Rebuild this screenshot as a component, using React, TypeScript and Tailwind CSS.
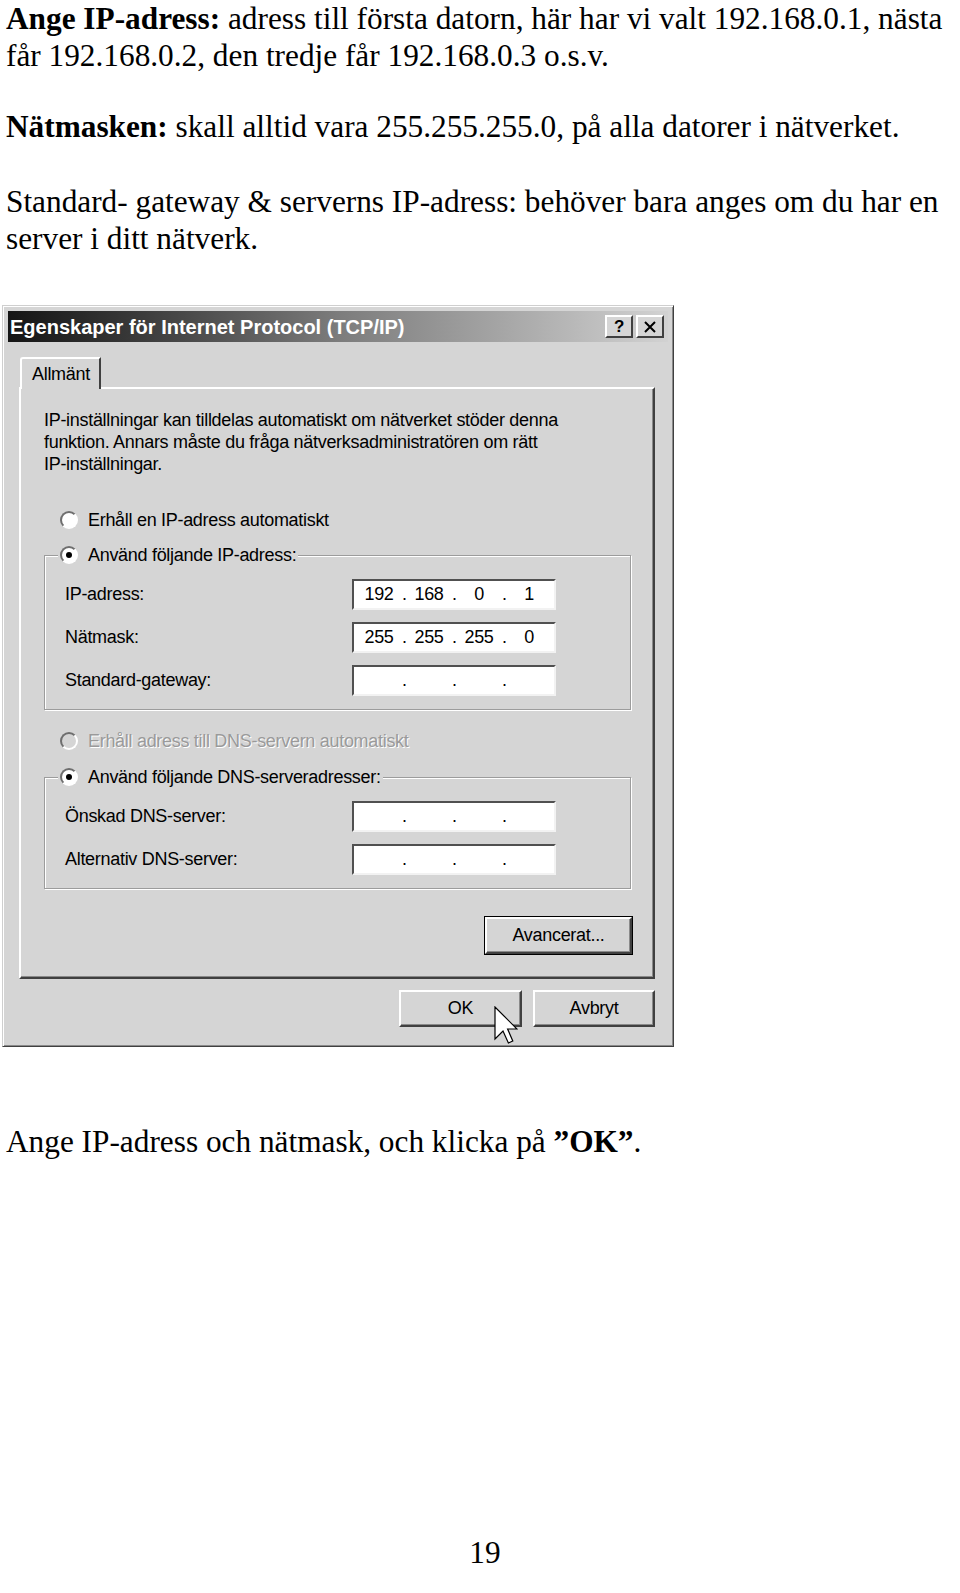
import React from 'react';

/**
 * Manual page: TCP/IP properties dialog (Windows 2000 style)
 */

const sans = "font-['Liberation_Sans',Arial,sans-serif]";

function Radio({ checked = false, disabled = false }: { checked?: boolean; disabled?: boolean }) {
  return (
    <span
      className={`flex h-[18px] w-[18px] shrink-0 items-center justify-center rounded-full border-2 border-t-[#6e6e6e] border-l-[#6e6e6e] border-b-white border-r-white ${
        disabled ? 'bg-[#d5d5d5]' : 'bg-white'
      }`}
    >
      {checked && <span className="h-[6px] w-[6px] rounded-full bg-black" />}
    </span>
  );
}

function RadioRow({ label, checked, disabled }: { label: string; checked?: boolean; disabled?: boolean }) {
  return (
    <div className="flex h-[22px] items-center gap-[10px]">
      <Radio checked={checked} disabled={disabled} />
      <span
        className={`whitespace-nowrap ${
          disabled ? 'text-[#9a9a9a] [text-shadow:1px_1px_0_#ffffff]' : 'text-black'
        }`}
      >
        {label}
      </span>
    </div>
  );
}

function IpField({ parts }: { parts?: string[] }) {
  const vals = parts ?? ['', '', '', ''];
  return (
    <div className="flex h-[31px] w-[204px] items-center border-2 border-t-[#505050] border-l-[#505050] border-b-[#f2f2f2] border-r-[#f2f2f2] bg-white px-[2px]">
      {vals.map((v, i) => (
        <React.Fragment key={i}>
          <span className="w-[46px] text-center">{v}</span>
          {i < 3 && <span className="w-[4px] text-center">.</span>}
        </React.Fragment>
      ))}
    </div>
  );
}

function FieldRow({ label, parts }: { label: string; parts?: string[] }) {
  return (
    <div className="flex items-center">
      <span className="w-[307px] pl-[20px] whitespace-nowrap">{label}</span>
      <IpField parts={parts} />
    </div>
  );
}

function Group({ legend, children }: { legend: string; children: React.ReactNode }) {
  return (
    <fieldset className="w-[587px] border border-[#9c9c9c] pb-[13px] shadow-[inset_1px_1px_0_#ffffff,1px_1px_0_#ffffff]">
      <legend className="ml-[13px] bg-[#d5d5d5] px-[2px]">
        <RadioRow label={legend} checked />
      </legend>
      <div className="mt-[13px] flex flex-col gap-[12px]">{children}</div>
    </fieldset>
  );
}

function WinButton({ label, width, isDefault = false }: { label: string; width: string; isDefault?: boolean }) {
  return (
    <div className={`${width} ${isDefault ? 'border border-black' : ''}`}>
      <div className="flex h-full items-center justify-center border-2 border-t-white border-l-white border-b-[#404040] border-r-[#404040] bg-[#d5d5d5] shadow-[inset_-1px_-1px_0_#8a8a8a]">
        {label}
      </div>
    </div>
  );
}

function Cursor() {
  return (
    <svg width="24" height="38" viewBox="0 0 12 19" className="absolute left-[491px] top-[700px]">
      <path
        d="M0.5 0.5 L0.5 16.5 L4.5 12.5 L7.2 18.5 L9.4 17.5 L6.8 11.5 L11.5 11.5 Z"
        fill="#ffffff"
        stroke="#000000"
        strokeWidth="0.6"
        strokeLinejoin="miter"
      />
    </svg>
  );
}

function Dialog() {
  return (
    <div
      className={`relative ml-[2px] mt-[48px] w-[672px] border border-t-[#cfcfcf] border-l-[#cfcfcf] border-b-[#404040] border-r-[#404040] bg-[#d5d5d5] p-[5px] text-[18px] tracking-[-0.3px] text-black shadow-[inset_1px_1px_0_#ffffff,inset_-1px_-1px_0_#8a8a8a] ${sans}`}
    >
      {/* title bar */}
      <div className="flex h-[31px] items-center justify-between bg-linear-to-r from-[#151515] via-[#7c7c7c] to-[#d2d2d2] pl-[2px] pr-[4px]">
        <span className="whitespace-nowrap text-[20px] font-bold tracking-normal text-white">
          Egenskaper för Internet Protocol (TCP/IP)
        </span>
        <div className="flex gap-[3px]">
          <div className="flex h-[23px] w-[28px] items-center justify-center border-2 border-t-white border-l-white border-b-[#404040] border-r-[#404040] bg-[#d5d5d5] text-[17px] font-bold">
            ?
          </div>
          <div className="flex h-[23px] w-[28px] items-center justify-center border-2 border-t-white border-l-white border-b-[#404040] border-r-[#404040] bg-[#d5d5d5]">
            <svg width="14" height="12" viewBox="0 0 14 12">
              <path d="M2 1 L12 11 M12 1 L2 11" stroke="#000" strokeWidth="2" />
            </svg>
          </div>
        </div>
      </div>

      {/* tab */}
      <div className="relative z-10 -mb-[2px] ml-[12px] mt-[15px] flex h-[32px] w-[81px] items-start rounded-tl-[3px] border-l-2 border-t-2 border-r-2 border-l-white border-t-white border-r-[#404040] bg-[#d5d5d5] pl-[10px] pt-[2px]">
        Allmänt
      </div>

      {/* tab panel */}
      <div className="ml-[11px] h-[592px] w-[636px] border-2 border-t-white border-l-white border-b-[#404040] border-r-[#404040] pl-[23px] pr-[22px] pt-[20px] shadow-[inset_-1px_-1px_0_#8a8a8a]">
        <p className="leading-[22px]">
          IP-inställningar kan tilldelas automatiskt om nätverket stöder denna
          <br />
          funktion. Annars måste du fråga nätverksadministratören om rätt
          <br />
          IP-inställningar.
        </p>

        <div className="mt-[34px] pl-[16px]">
          <RadioRow label="Erhåll en IP-adress automatiskt" />
        </div>

        <div className="mt-[13px]">
          <Group legend="Använd följande IP-adress:">
            <FieldRow label="IP-adress:" parts={['192', '168', '0', '1']} />
            <FieldRow label="Nätmask:" parts={['255', '255', '255', '0']} />
            <FieldRow label="Standard-gateway:" />
          </Group>
        </div>

        <div className="mt-[20px] pl-[16px]">
          <RadioRow label="Erhåll adress till DNS-servern automatiskt" disabled />
        </div>

        <div className="mt-[14px]">
          <Group legend="Använd följande DNS-serveradresser:">
            <FieldRow label="Önskad DNS-server:" />
            <FieldRow label="Alternativ DNS-server:" />
          </Group>
        </div>

        <div className="mt-[27px] flex w-[589px] justify-end">
          <div className="h-[39px]">
            <WinButton label="Avancerat..." width="w-[149px] h-[39px]" isDefault />
          </div>
        </div>
      </div>

      {/* dialog buttons */}
      <div className="mb-[14px] mt-[11px] flex justify-end gap-[11px] pr-[13px]">
        <WinButton label="OK" width="w-[123px] h-[37px]" />
        <WinButton label="Avbryt" width="w-[122px] h-[37px]" />
      </div>

      <Cursor />
    </div>
  );
}

export default function App() {
  return (
    <div className="min-h-[1593px] w-[960px] bg-white font-['Liberation_Serif','Times_New_Roman',serif] text-black">
      <div className="pl-[6px] text-[31.3px] leading-[37px] whitespace-nowrap">
        <p>
          <b>Ange IP-adress:</b> adress till första datorn, här har vi valt 192.168.0.1, nästa
          <br />
          får 192.168.0.2, den tredje får 192.168.0.3 o.s.v.
        </p>
        <p className="mt-[34px]">
          <b>Nätmasken:</b> skall alltid vara 255.255.255.0, på alla datorer i nätverket.
        </p>
        <p className="mt-[38px]">
          Standard- gateway &amp; serverns IP-adress: behöver bara anges om du har en
          <br />
          server i ditt nätverk.
        </p>
      </div>

      <Dialog />

      <p className="mt-[76px] pl-[6px] text-[31.3px] leading-[37px] whitespace-nowrap">
        Ange IP-adress och nätmask, och klicka på <b>”OK”</b>.
      </p>

      <p className="mt-[374px] pl-[10px] text-center text-[31.3px] leading-[37px]">19</p>
    </div>
  );
}
